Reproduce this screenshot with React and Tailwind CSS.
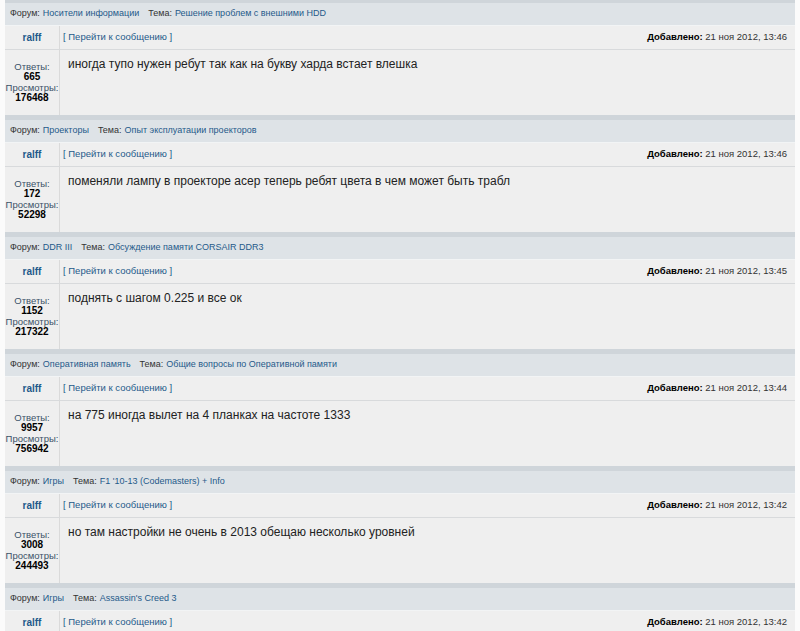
import React from 'react';

const posts = [
  {
    forum: 'Носители информации',
    topic: 'Решение проблем с внешними HDD',
    date: '21 ноя 2012, 13:46',
    replies: '665',
    views: '176468',
    text: 'иногда тупо нужен ребут так как на букву харда встает влешка',
  },
  {
    forum: 'Проекторы',
    topic: 'Опыт эксплуатации проекторов',
    date: '21 ноя 2012, 13:46',
    replies: '172',
    views: '52298',
    text: 'поменяли лампу в проекторе асер теперь ребят цвета в чем может быть трабл',
  },
  {
    forum: 'DDR III',
    topic: 'Обсуждение памяти CORSAIR DDR3',
    date: '21 ноя 2012, 13:45',
    replies: '1152',
    views: '217322',
    text: 'поднять с шагом 0.225 и все ок',
  },
  {
    forum: 'Оперативная память',
    topic: 'Общие вопросы по Оперативной памяти',
    date: '21 ноя 2012, 13:44',
    replies: '9957',
    views: '756942',
    text: 'на 775 иногда вылет на 4 планках на частоте 1333',
  },
  {
    forum: 'Игры',
    topic: "F1 '10-13 (Codemasters) + Info",
    date: '21 ноя 2012, 13:42',
    replies: '3008',
    views: '244493',
    text: 'но там настройки не очень в 2013 обещаю несколько уровней',
  },
  {
    forum: 'Игры',
    topic: "Assassin's Creed 3",
    date: '21 ноя 2012, 13:42',
    replies: '',
    views: '',
    text: '',
  },
];

function Post({ post, first }) {
  return (
    <div>
      <div className={first ? 'h-[3px] bg-[#cfd5da]' : 'h-[5px] bg-[#cfd5da]'} />
      <div className="h-[23px] bg-[#dee3e7] border-b border-[#f2f4f5] flex items-center px-[5px] text-[9px] text-[#333]">
        <span>Форум:</span>
        <span className="ml-[3px] text-[#1e5a8a]">{post.forum}</span>
        <span className="ml-[9px]">Тема:</span>
        <span className="ml-[3px] text-[#1e5a8a]">{post.topic}</span>
      </div>
      <div className="flex h-[24px] bg-[#efefef] border-b border-[#d8dadc]">
        <div className="w-[55px] shrink-0 border-r border-[#dadada] flex items-center justify-center text-[10px] font-bold text-[#1e5a8a]">
          ralff
        </div>
        <div className="flex-1 flex items-center justify-between pl-[3px] pr-[8px] text-[9.5px]">
          <span className="text-[#1e5a8a]">[ Перейти к сообщению ]</span>
          <span className="text-[#333]">
            <b className="text-black">Добавлено:</b> {post.date}
          </span>
        </div>
      </div>
      <div className="flex h-[65px] bg-[#efefef]">
        <div className="w-[55px] shrink-0 border-r border-[#dadada] flex flex-col items-center justify-center text-[9.5px] leading-[10.5px]">
          <span className="text-[#3b5268]">Ответы:</span>
          <b className="text-[10px] text-black">{post.replies}</b>
          <span className="text-[#3b5268]">Просмотры:</span>
          <b className="text-[10px] text-black">{post.views}</b>
        </div>
        <div className="flex-1 pl-[8px] pt-[6px] text-[12px] leading-[16px] text-[#222]">{post.text}</div>
      </div>
    </div>
  );
}

export default function App() {
  return (
    <div className="min-h-screen bg-[#fbfbfb] px-[5px] font-['Liberation_Sans',Tahoma,Arial,sans-serif]">
      {posts.map((p, i) => (
        <Post key={i} post={p} first={i === 0} />
      ))}
    </div>
  );
}
